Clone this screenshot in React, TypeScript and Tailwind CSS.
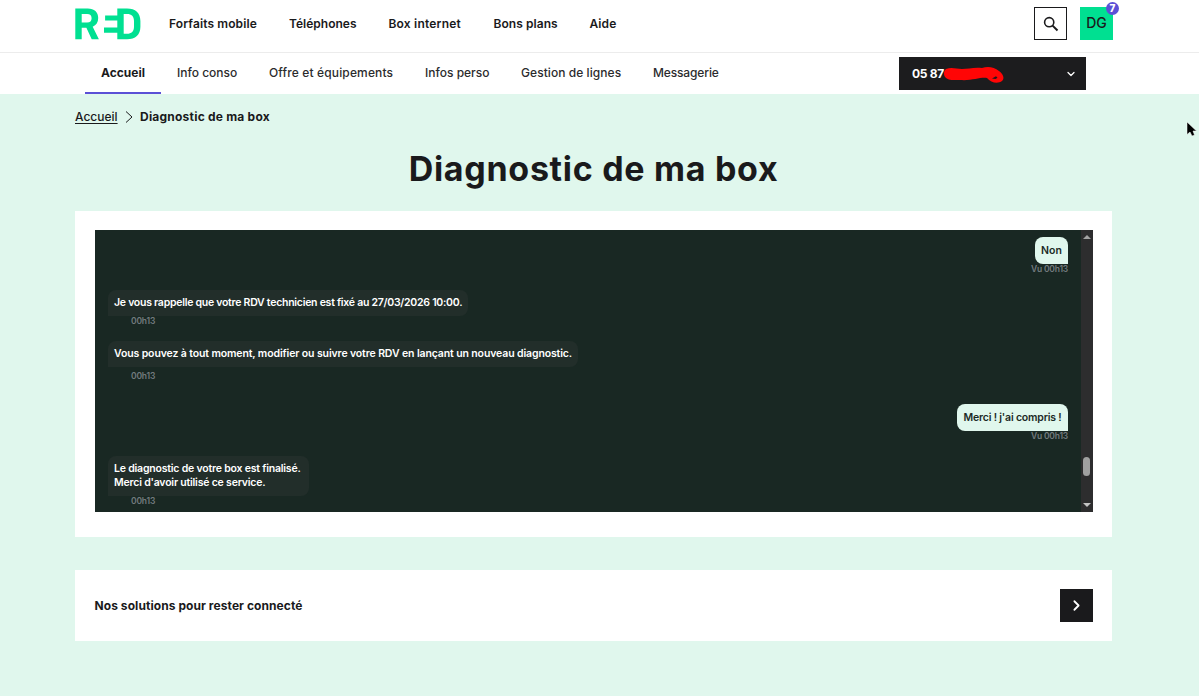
import { ChevronDown, ChevronRight } from 'lucide-react'

const mainLinks = [
  { label: 'Forfaits mobile', className: 'w-[88px] tracking-[0.12px]' },
  { label: 'Téléphones', className: 'w-[67.5px]' },
  { label: 'Box internet', className: 'w-[73px] tracking-[0.2px]' },
  { label: 'Bons plans', className: 'w-16 tracking-[0.06px]' },
  { label: 'Aide', className: 'w-7 tracking-[0.1px]' },
]

const accountLinks = [
  { label: 'Info conso', className: 'w-[60px]' },
  { label: 'Offre et équipements', className: 'w-[124px] tracking-[0.14px]' },
  { label: 'Infos perso', className: 'w-16' },
  { label: 'Gestion de lignes', className: 'w-[100px] tracking-[0.06px]' },
  { label: 'Messagerie', className: 'w-[66px] tracking-[-0.14px]' },
]

const Logo = () => (
  <svg width="66" height="32" viewBox="0 0 66 32" fill="#00e091">
    <path fillRule="evenodd" d="M0.3 0.5h12.4c6.600 0 10.500 3.600 10.500 9.600 0 4.400-2 7.300-5.500 8.700L23.900 31.300h-7.200L11.400 19.700H6.700v11.600h-6.400zM6.700 6v8.500h5.400c3 0 4.500-1.600 4.500-4.300s-1.500-4.200-4.500-4.200z" />
    <path fillRule="evenodd" d="M42.300 0.500h9.700c8.500 0 13.400 4.500 13.400 12.500v5.800c0 8-4.900 12.500-13.400 12.500h-9.700v-6.500h-13.300v-5.200h13.300v-7h-12.200v-5.200h12.200zM48.700 6v19.800h3.300c4.600 0 7-2.400 7-7v-5.800c0-4.600-2.400-7-7-7z" />
  </svg>
)

const SearchIcon = () => (
  <svg width="16" height="16" viewBox="0 0 16 16" fill="none" stroke="#1a1a1c">
    <circle cx="6.200" cy="6.200" r="4.600" strokeWidth="1.600" />
    <path d="M9.600 9.600l4.900 4.900" strokeWidth="2" />
  </svg>
)

const Header = () => (
  <header className="flex h-[53px] items-start border-b border-[#ececec] bg-white pl-[75px]">
    <div className="mt-[7.5px] w-[94px] shrink-0">
      <Logo />
    </div>
    <nav className="flex h-[47px] flex-1 items-center gap-8 text-xs font-semibold whitespace-nowrap">
      {mainLinks.map((link) => (
        <a key={link.label} className={link.className}>{link.label}</a>
      ))}
    </nav>
    <div className="mt-[7px] mr-[86px] flex gap-[13px]">
      <button className="flex size-[33px] items-center justify-center border border-[#1a1a1c]">
        <SearchIcon />
      </button>
      <div className="relative flex size-[33px] items-center justify-center bg-[#00e091] text-sm font-medium">
        <span className="-mt-0.5">DG</span>
        <span className="absolute -top-[5px] -right-[6px] flex size-[13px] items-center justify-center rounded-full bg-[#5b50d6] text-[10px] font-extrabold text-white">
          7
        </span>
      </div>
    </div>
  </header>
)

const AccountBar = () => (
  <div className="flex h-[41px] bg-white pl-[85px] text-xs whitespace-nowrap">
    <nav className="flex flex-1 gap-8">
      <a className="-mr-4 flex w-[76px] justify-center border-b-2 border-[#5b50d6] pt-3 leading-4 font-bold">Accueil</a>
      {accountLinks.map((link) => (
        <a key={link.label} className={`pt-3 leading-4 font-medium text-[#2b2b2d] ${link.className}`}>{link.label}</a>
      ))}
    </nav>
    <div className="mt-1 mr-[113px] flex h-[33px] w-[187px] items-center bg-[#1c1c1e] pr-[9px] pl-[13px] font-bold text-white">
      <span className="w-8 tracking-[-0.3px]">05 87</span>
      {/* number masked by hand */}
      <svg width="60" height="18" viewBox="0 0 60 18" className="mt-0.5">
        <path d="M2 3C8 1 12 3 18 3C24 3 30 1 38 2C44 0 50 1 55 5C59 8 61 12 58 15C54 18 47 17 43 12C36 11 28 15 16 14C10 14 4 15 1 11C-1 8 0 5 2 3Z" fill="#ff0505" />
        <path d="M48 12.500l4-2.200 1.500 1.500-2 1.200z" fill="#1c1c1e" />
      </svg>
      <ChevronDown size={12} strokeWidth={2.5} className="ml-auto" />
    </div>
  </div>
)

type MessageProps = {
  children: React.ReactNode
  time: string
  className: string
  timeClassName?: string
}

const BotMessage = ({ children, time, className, timeClassName = 'mt-0' }: MessageProps) => (
  <div className="flex flex-col items-start">
    <div className={`rounded-lg rounded-bl-none bg-[#222e2a] px-1.5 py-1.5 leading-[14px] whitespace-nowrap text-white ${className}`}>
      {children}
    </div>
    <span className={`ml-[23px] text-[8.5px] leading-[10px] tracking-[-0.2px] text-[#737b7e] ${timeClassName}`}>{time}</span>
  </div>
)

const UserMessage = ({ children, time, className }: MessageProps) => (
  <div className="flex flex-col items-end">
    <div className={`h-[27px] rounded-lg rounded-br-none bg-[#e0f7ed] px-1.5 text-center leading-[28px] whitespace-nowrap text-[#1b2a26] ${className}`}>
      {children}
    </div>
    <span className="text-[8.5px] leading-[10px] tracking-[-0.2px] text-[#737b7e]">{time}</span>
  </div>
)

const Chat = () => (
  <div className="flex h-[282px] overflow-hidden bg-[#192823] text-[10.5px] font-semibold">
    <div className="flex-1 px-[13px] pt-[7px]">
      <UserMessage time="Vu 00h13" className="w-[33px]">Non</UserMessage>
      <div className="mt-4">
        <BotMessage time="00h13" className="w-[360px] tracking-[-0.26px]">
          Je vous rappelle que votre RDV technicien est fixé au 27/03/2026 10:00.
        </BotMessage>
      </div>
      <div className="mt-[15px]">
        <BotMessage time="00h13" className="w-[470px] tracking-[-0.12px]" timeClassName="mt-1">
          Vous pouvez à tout moment, modifier ou suivre votre RDV en lançant un nouveau diagnostic.
        </BotMessage>
      </div>
      <div className="mt-[23px]">
        <UserMessage time="Vu 00h13" className="w-[111px] tracking-[-0.2px]">Merci ! j'ai compris !</UserMessage>
      </div>
      <div className="mt-[15px]">
        <BotMessage time="00h13" className="w-[201px] tracking-[-0.2px]">
          Le diagnostic de votre box est finalisé.
          <br />
          Merci d'avoir utilisé ce service.
        </BotMessage>
      </div>
    </div>
    <div className="flex w-3 flex-col items-center bg-[#2d2d2e] py-[5px] pr-px">
      <svg width="8" height="4" viewBox="0 0 8 4"><path d="M0 4l4-4 4 4z" fill="#a3a3a3" /></svg>
      <div className="mt-[218px] h-[19px] w-[7px] rounded-full bg-[#a0a0a0]" />
      <svg width="8" height="4" viewBox="0 0 8 4" className="mt-auto"><path d="M0 0l4 4 4-4z" fill="#c4c4c4" /></svg>
    </div>
  </div>
)

export default function App() {
  return (
    <div className="relative h-[696px] overflow-hidden bg-[#e0f7ed] font-['Inter',sans-serif] text-[#1a1a1c]">
      <Header />
      <AccountBar />
      <main className="ml-[75px] w-[1037px]">
        <div className="flex h-[46px] items-center text-xs">
          <a className="w-[43px] font-medium underline underline-offset-2">Accueil</a>
          <svg width="8" height="12" viewBox="0 0 8 12" className="mr-[7px] ml-[7px]" fill="none" stroke="#1a1a1c">
            <path d="M1 0.500l6 5.500-6 5.500" />
          </svg>
          <span className="font-bold tracking-[0.22px]">Diagnostic de ma box</span>
        </div>
        <h1 className="h-[71px] pt-[7px] text-center text-[34px] leading-[44px] font-bold tracking-[0.7px]">
          Diagnostic de ma box
        </h1>
        <section className="h-[326px] bg-white pt-[19px] pr-[19px] pl-5">
          <Chat />
        </section>
        <section className="mt-[33px] flex h-[71px] items-center justify-between bg-white pr-[19px] pl-[19.5px]">
          <h2 className="text-xs font-bold tracking-[0.07px]">Nos solutions pour rester connecté</h2>
          <button className="flex size-[33px] items-center justify-center bg-[#1a1a1c] text-white">
            <ChevronRight size={17} strokeWidth={2.5} />
          </button>
        </section>
      </main>
      <svg width="11" height="16" viewBox="0 0 11 16" className="absolute top-[121px] left-[1186px]">
        <path d="M1 1v12.500l3-2.500 2 4 2.500-1-1.500-4h3.500z" fill="#000" stroke="#fff" strokeWidth="0.5" />
      </svg>
    </div>
  )
}
